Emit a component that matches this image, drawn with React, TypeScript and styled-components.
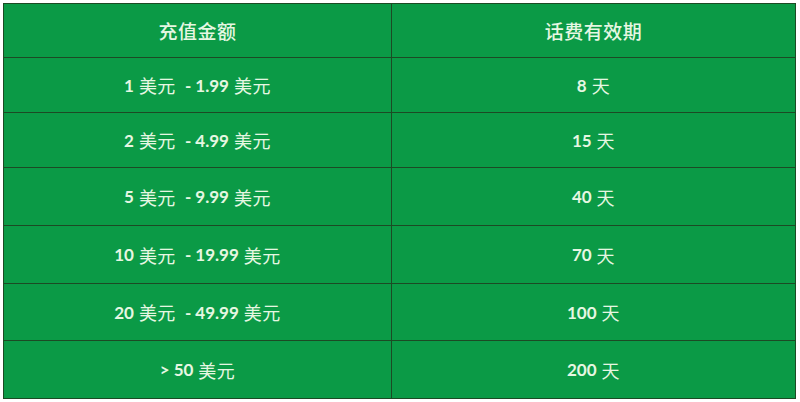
import React from 'react';
import styled, { createGlobalStyle } from 'styled-components';

const GlobalStyle = createGlobalStyle`
  html, body {
    margin: 0;
    padding: 0;
    background: #ffffff;
  }
`;

const Page = styled.div`
  width: 800px;
  height: 402px;
  box-sizing: border-box;
  padding: 3px 4px 3px 3px;
`;

const Table = styled.div`
  display: grid;
  grid-template-columns: 388px 1fr;
  grid-template-rows: 54px 55px 55px 58px 58px 57px 1fr;
  height: 396px;
  background: #0b9a46;
  border: 1px solid #1c4a24;
  box-sizing: border-box;
`;

const Cell = styled.div<{ $last?: boolean; $bottom?: boolean }>`
  display: flex;
  align-items: center;
  justify-content: center;
  gap: 5px;
  color: #e6f7e2;
  font-family: Lato, "Liberation Sans", "Noto Sans CJK SC", sans-serif;
  font-size: 17px;
  font-weight: 700;
  border-right: ${p => (p.$last ? 'none' : '1.5px solid #1c4a24')};
  border-bottom: ${p => (p.$bottom ? 'none' : '1.5px solid #1c4a24')};
`;

const Han = styled.span<{ $head?: boolean }>`
  font-family: "Noto Sans CJK SC", sans-serif;
  font-weight: ${p => (p.$head ? 500 : 400)};
  font-size: ${p => (p.$head ? '19px' : '18px')};
  letter-spacing: 0.5px;
`;

const Dash = styled.span`
  margin-left: 4px;
`;

const rows = [
  { from: '1', to: '1.99', days: '8' },
  { from: '2', to: '4.99', days: '15' },
  { from: '5', to: '9.99', days: '40' },
  { from: '10', to: '19.99', days: '70' },
  { from: '20', to: '49.99', days: '100' },
];

export default function App() {
  return (
    <>
      <GlobalStyle />
      <Page>
        <Table>
          <Cell><Han $head>充值金额</Han></Cell>
          <Cell $last><Han $head>话费有效期</Han></Cell>
          {rows.map(r => (
            <React.Fragment key={r.from}>
              <Cell>
                {r.from}<Han>美元</Han><Dash>- {r.to}</Dash><Han>美元</Han>
              </Cell>
              <Cell $last>
                {r.days}<Han>天</Han>
              </Cell>
            </React.Fragment>
          ))}
          <Cell $bottom>
            &gt; 50<Han>美元</Han>
          </Cell>
          <Cell $last $bottom>
            200<Han>天</Han>
          </Cell>
        </Table>
      </Page>
    </>
  );
}
